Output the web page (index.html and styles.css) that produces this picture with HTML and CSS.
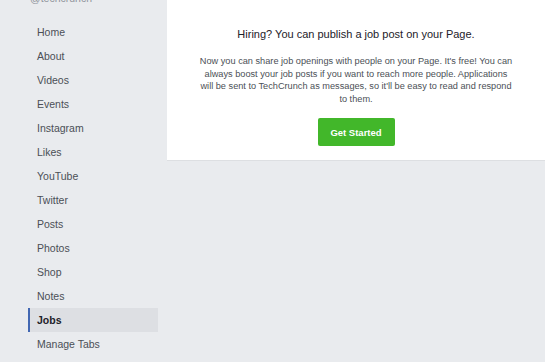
FILE: index.html
```html
<!DOCTYPE html>
<html>
<head>
<meta charset="utf-8">
<link rel="stylesheet" href="styles.css">
</head>
<body>
<div class="page">
  <nav class="sidebar">
    <div class="handle">@techcrunch</div>
    <ul class="tabs">
      <li class="tab">Home</li>
      <li class="tab">About</li>
      <li class="tab">Videos</li>
      <li class="tab">Events</li>
      <li class="tab">Instagram</li>
      <li class="tab">Likes</li>
      <li class="tab">YouTube</li>
      <li class="tab">Twitter</li>
      <li class="tab">Posts</li>
      <li class="tab">Photos</li>
      <li class="tab">Shop</li>
      <li class="tab">Notes</li>
      <li class="tab active">Jobs</li>
      <li class="tab">Manage Tabs</li>
    </ul>
  </nav>
  <main class="main">
    <section class="card">
      <h2 class="title">Hiring? You can publish a job post on your Page.</h2>
      <p class="desc">Now you can share job openings with people on your Page. It's free! You can always boost your job posts if you want to reach more people. Applications will be sent to TechCrunch as messages, so it'll be easy to read and respond to them.</p>
      <button class="cta">Get Started</button>
    </section>
  </main>
</div>
</body>
</html>
```
FILE: styles.css
```css
* { box-sizing: border-box; }
html, body { margin: 0; padding: 0; }
body {
  background: #e9ebee;
  font-family: "Liberation Sans", Arial, sans-serif;
  width: 545px;
  height: 362px;
  overflow: hidden;
}
.page { display: flex; align-items: flex-start; }
.sidebar { width: 167px; flex: none; padding-left: 28px; }
.handle {
  margin-top: -9px;
  height: 14px;
  padding-left: 2px;
  font-size: 10.5px;
  line-height: 14px;
  color: #90949c;
}
.tabs { list-style: none; margin: 15px 0 0; padding: 0; width: 130px; }
.tab {
  height: 24px;
  line-height: 24px;
  padding-left: 7px;
  font-size: 10.5px;
  color: #4b4f56;
  border-left: 2px solid transparent;
}
.tab.active {
  background: #dddfe3;
  border-left-color: #4267b2;
  color: #1d2129;
  font-weight: bold;
}
.main { flex: 1; }
.card {
  background: #fff;
  border-bottom: 1px solid #dddfe2;
  height: 161px;
  padding: 27px 20px 0;
  display: flex;
  flex-direction: column;
  align-items: center;
  text-align: center;
}
.title {
  margin: 0;
  font-size: 11px;
  line-height: 14px;
  font-weight: normal;
  color: #1d2129;
}
.desc {
  margin: 14px 0 0;
  width: 318px;
  font-size: 9.2px;
  line-height: 12.5px;
  color: #4b4f56;
}
.cta {
  margin-top: 13px;
  width: 77px;
  height: 28px;
  border: none;
  border-radius: 2px;
  background: #42b72a;
  color: #fff;
  font-family: inherit;
  font-size: 9.5px;
  font-weight: bold;
  padding: 0;
}
```
